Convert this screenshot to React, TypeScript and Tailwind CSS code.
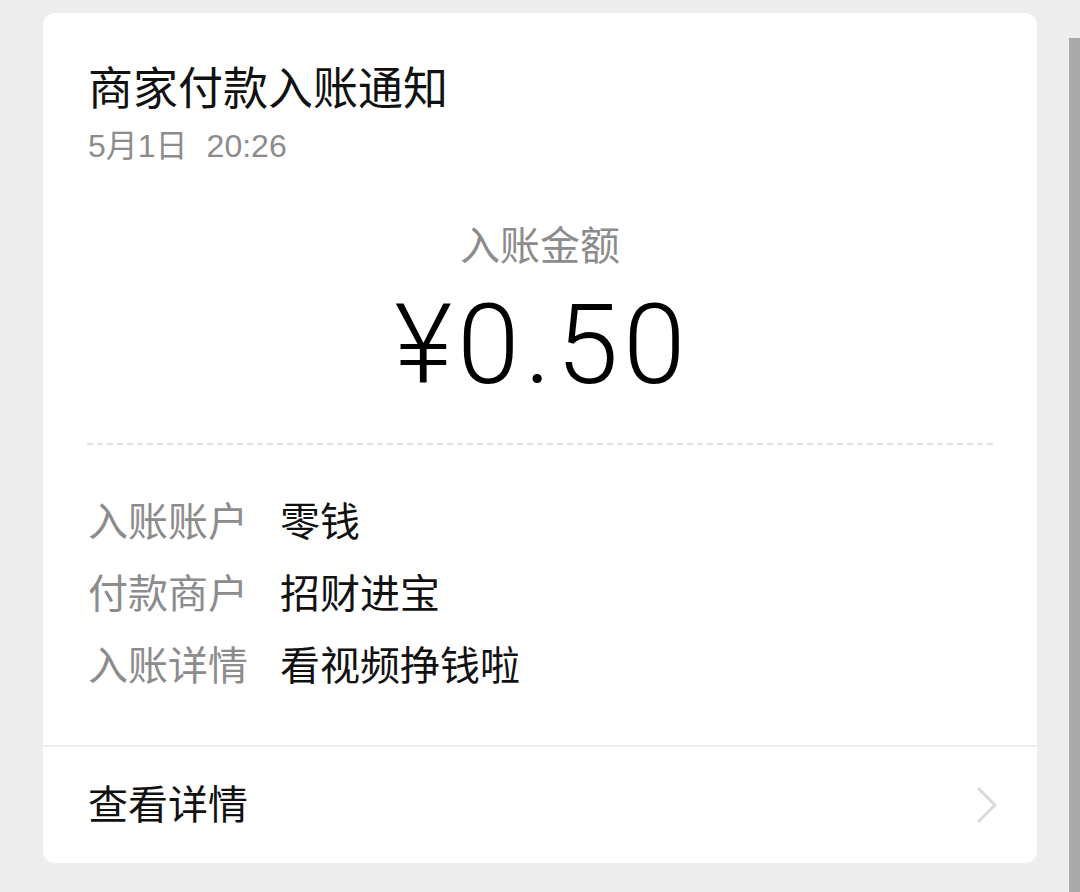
import React from 'react'

const rows = [
  { label: '入账账户', value: '零钱' },
  { label: '付款商户', value: '招财进宝' },
  { label: '入账详情', value: '看视频挣钱啦' },
]

export default function App() {
  return (
    <div
      className="relative min-h-[892px] bg-[#ededed] pt-[13px] pl-[43px] pr-[43px]"
      style={{ fontFamily: '"Liberation Sans", "Noto Sans CJK SC", sans-serif' }}
    >
      {/* overlay scrollbar */}
      <div className="absolute right-0 top-[38px] bottom-0 w-[11px] bg-[#aaaaaa]" />

      <div className="w-[994px] h-[850px] bg-white rounded-[12px] flex flex-col">
        {/* Header */}
        <div className="pt-[49px] pl-[45px]">
          <div className="text-[45px] leading-[56px] text-[#111]">商家付款入账通知</div>
          <div className="mt-[8px] text-[32px] leading-[40px] text-[#8c8c8c]">
            5月1日<span className="ml-[19px]">20:26</span>
          </div>
        </div>

        {/* Amount */}
        <div className="mt-[56px] flex flex-col items-center">
          <div className="text-[40px] leading-[48px] text-[#8c8c8c]">入账金额</div>
          <div className="mt-[19px] pl-[5px] font-['Roboto',sans-serif] font-light text-[112px] leading-[112px] tracking-[5px] text-black">
            ¥0.50
          </div>
        </div>

        <div className="mt-[42px] mx-[44px] border-t-2 border-dashed border-[#e3e3e3]" />

        {/* Details */}
        <div className="mt-[41px] pl-[45px] flex flex-col">
          {rows.map((r) => (
            <div key={r.label} className="flex items-center h-[72px] text-[40px] leading-[72px]">
              <span className="w-[192px] text-[#8c8c8c]">{r.label}</span>
              <span className="text-[#111]">{r.value}</span>
            </div>
          ))}
        </div>

        <div className="mt-[43px] border-t-2 border-[#ececec]" />

        {/* Footer */}
        <div className="flex-1 flex items-center justify-between pl-[45px] pr-[40px]">
          <span className="text-[40px] leading-[48px] text-[#111]">查看详情</span>
          <svg width="20" height="36" viewBox="0 0 20 36" fill="none">
            <path d="M2 2 L18 18 L2 34" stroke="#d9d9d9" strokeWidth="3" strokeLinecap="round" strokeLinejoin="round" />
          </svg>
        </div>
      </div>
    </div>
  )
}
